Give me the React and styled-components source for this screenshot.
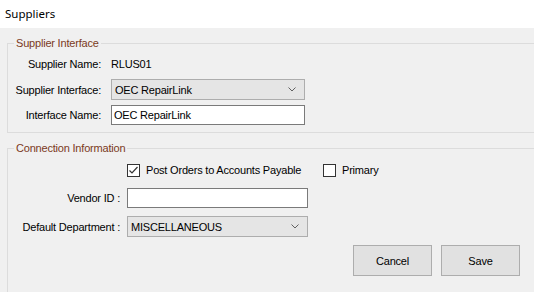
import React from 'react';
import styled, { createGlobalStyle } from 'styled-components';

const GlobalStyle = createGlobalStyle`
  html, body {
    margin: 0;
    padding: 0;
    background: #f0f0f0;
    overflow: hidden;
  }
  body {
    font-family: "Liberation Sans", Arial, sans-serif;
    font-size: 11px;
    color: #000;
  }
`;

const Window = styled.div`
  width: 534px;
  height: 292px;
  overflow: hidden;
  background: #f0f0f0;
`;

const TitleBar = styled.div`
  height: 28px;
  background: #fff;
  display: flex;
  align-items: center;
  padding-left: 5px;
  padding-bottom: 2px;
  box-sizing: border-box;
  font-family: "Segoe UI", "Noto Sans", sans-serif;
  font-size: 11.5px;
`;

const Body = styled.div`
  padding-left: 7px;
`;

const Group = styled.fieldset`
  margin: ${p => p.top}px 0 0;
  padding: 0;
  min-width: 0;
  width: 560px;
  border: 1px solid #dcdcdc;
  box-sizing: border-box;
  height: ${p => p.height ? `${p.height}px` : 'auto'};
`;

const Legend = styled.legend`
  margin-left: 6px;
  padding: 0 2px;
  line-height: 14px;
  font-size: 11px;
  letter-spacing: -0.2px;
  color: #7b3a1c;
`;

const Form = styled.div`
  display: grid;
  grid-template-columns: ${p => p.labelWidth}px auto;
  column-gap: ${p => p.gap}px;
  row-gap: ${p => p.rowGap}px;
  align-items: center;
  justify-items: start;
  padding: ${p => p.pad};
  letter-spacing: -0.2px;
`;

const Label = styled.div`
  justify-self: end;
  white-space: nowrap;
`;

const Value = styled.div`
  height: 21px;
  display: flex;
  align-items: center;
`;

const TextBox = styled.div`
  width: ${p => p.width}px;
  height: 20px;
  box-sizing: border-box;
  border: 1px solid #7a7a7a;
  background: #fff;
  display: flex;
  align-items: center;
  padding-left: 2px;
`;

const Combo = styled.div`
  width: ${p => p.width}px;
  height: ${p => p.height}px;
  box-sizing: border-box;
  border: 1px solid #adadad;
  background: #e5e5e5;
  display: flex;
  align-items: center;
  justify-content: space-between;
  padding: 0 8px 0 3px;
`;

const CheckRow = styled.div`
  display: flex;
  align-items: center;
  height: 20px;
`;

const CheckItem = styled.label`
  display: flex;
  align-items: center;
  gap: 6px;
  width: ${p => p.width ? `${p.width}px` : 'auto'};
`;

const Box = styled.span`
  width: 13px;
  height: 13px;
  box-sizing: border-box;
  border: 1px solid #333;
  background: #fff;
  display: flex;
  align-items: center;
  justify-content: center;
`;

const ButtonRow = styled.div`
  grid-column: 1 / span 2;
  display: flex;
  gap: 9px;
  padding-left: 345px;
`;

const Button = styled.div`
  width: 79px;
  height: 31px;
  box-sizing: border-box;
  border: 1px solid #adadad;
  background: #e1e1e1;
  display: flex;
  align-items: center;
  justify-content: center;
`;

const Chevron = () => (
  <svg width="8" height="5" viewBox="0 0 8 5">
    <polyline points="0.5,0.5 4,4 7.5,0.5" fill="none" stroke="#606060" strokeWidth="1" />
  </svg>
);

const Check = ({ checked }) => (
  <Box>
    {checked && (
      <svg width="11" height="11" viewBox="0 0 11 11">
        <polyline points="1.5,5.5 4,8 9.5,2" fill="none" stroke="#333" strokeWidth="1.2" />
      </svg>
    )}
  </Box>
);

export default function App() {
  return (
    <>
      <GlobalStyle />
      <Window>
        <TitleBar>Suppliers</TitleBar>
        <Body>
          <Group top={8}>
            <Legend>Supplier Interface</Legend>
            <Form labelWidth={93} gap={10} rowGap={5} pad="3px 0 7px">
              <Label>Supplier Name:</Label>
              <Value>RLUS01</Value>
              <Label>Supplier Interface:</Label>
              <Combo width={194} height={21}>
                <span>OEC RepairLink</span>
                <Chevron />
              </Combo>
              <Label>Interface Name:</Label>
              <TextBox width={194}>OEC RepairLink</TextBox>
            </Form>
          </Group>
          <Group top={8} height={200}>
            <Legend>Connection Information</Legend>
            <Form labelWidth={112} gap={7} rowGap={8} pad="5px 0 0">
              <span />
              <CheckRow>
                <CheckItem width={196}>
                  <Check checked />
                  Post Orders to Accounts Payable
                </CheckItem>
                <CheckItem>
                  <Check />
                  Primary
                </CheckItem>
              </CheckRow>
              <Label>Vendor ID :</Label>
              <TextBox width={181} />
              <Label>Default Department :</Label>
              <Combo width={181} height={21}>
                <span>MISCELLANEOUS</span>
                <Chevron />
              </Combo>
              <ButtonRow>
                <Button>Cancel</Button>
                <Button>Save</Button>
              </ButtonRow>
            </Form>
          </Group>
        </Body>
      </Window>
    </>
  );
}
